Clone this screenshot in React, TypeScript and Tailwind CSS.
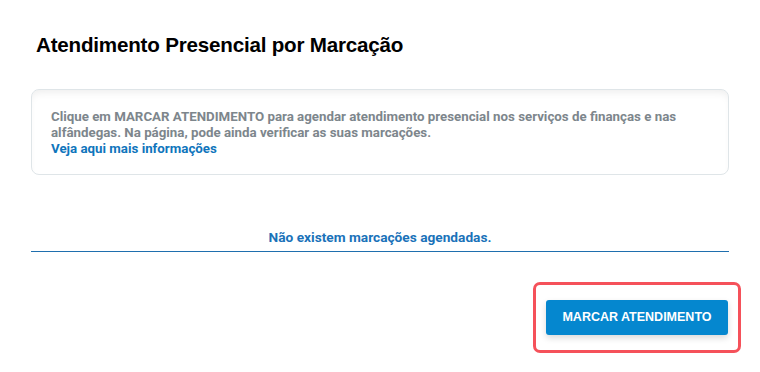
export default function App() {
  return (
    <div className="w-[760px] h-[372px] bg-white overflow-hidden">
      <div className="mx-[31px] w-[698px]">
        <h1 className="pt-[32px] pl-[5px] text-[20.6px] leading-[26px] font-bold text-black tracking-[-0.2px] font-['Liberation_Sans',Arial,sans-serif]">
          Atendimento Presencial por Marcação
        </h1>

        {/* Info box */}
        <div className="mt-[31px] h-[86px] rounded-[8px] border border-[#dfe5e8] bg-white shadow-[inset_0_6px_8px_-4px_rgba(0,0,0,0.08)] pl-[19px] pr-[8px] pt-[19px] font-['Roboto',sans-serif] text-[13.3px] leading-[16px] font-bold">
          <p className="text-[#7d868c]">
            Clique em MARCAR ATENDIMENTO para agendar atendimento presencial nos serviços de finanças e nas alfândegas. Na página, pode ainda verificar as suas marcações.
          </p>
          <a className="text-[#0f75bc] cursor-pointer">Veja aqui mais informações</a>
        </div>

        {/* Empty state */}
        <div className="mt-[53px] border-b border-[#1f6fae] pb-[5px] text-center font-['Roboto',sans-serif] text-[13.7px] leading-[18px] font-bold text-[#1a72b9]">
          Não existem marcações agendadas.
        </div>

        <div className="flex justify-end mt-[30px] mr-[-12px]">
          <div className="rounded-[7px] border-[3px] border-[#f5515a] px-[10px] pt-[15px] pb-[15px]">
            <button className="h-[35px] w-[182px] rounded-[3px] bg-[#0587cf] text-white text-[12.5px] font-bold font-['Liberation_Sans',Arial,sans-serif] shadow-[0_3px_6px_rgba(0,0,0,0.15)]">
              MARCAR ATENDIMENTO
            </button>
          </div>
        </div>
      </div>
    </div>
  );
}
